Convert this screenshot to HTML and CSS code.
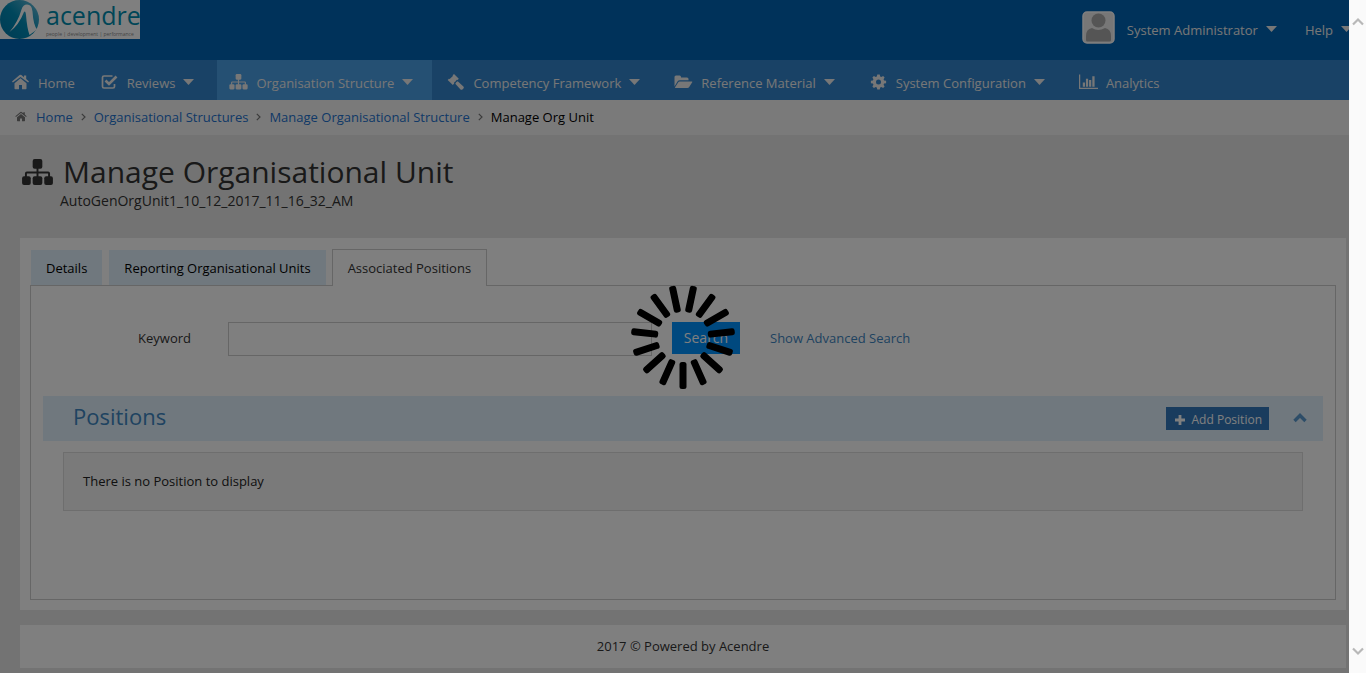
FILE: index.html
```html
<!DOCTYPE html>
<html lang="en">
<head>
<meta charset="utf-8">
<meta name="viewport" content="width=device-width, initial-scale=1">
<title>Manage Organisational Unit</title>
<link rel="stylesheet" href="styles.css">
</head>
<body>
<svg class="sprite" aria-hidden="true">
  <symbol id="sitemap" viewBox="0 0 32 28">
    <rect x="11" y="0" width="10" height="10" rx="2"/><rect x="0" y="18" width="9" height="9" rx="2"/><rect x="11" y="18" width="10" height="9" rx="2"/><rect x="23" y="18" width="9" height="9" rx="2"/>
    <path d="M15 9h2v4h10q2 0 2 2v4h-2v-4H17v4h-2v-4H5v4H3v-4q0-2 2-2h10z"/>
  </symbol>
  <symbol id="home" viewBox="0 0 18 16">
    <path d="M9 4.200 15 9.200V14.500q0 .7-.7.700H10.500V11h-3v4.200H3.700q-.7 0-.7-.7V9.200z"/>
    <path d="M9 .8q.5 0 .9.300L12.500 3.300V1.500h2.200V5.100L17.500 7.500l-.9 1.100L9 2.900 1.400 8.600.5 7.500 8.100 1.100Q8.500.8 9 .8z"/>
  </symbol>
  <symbol id="check" viewBox="0 0 18 16">
    <path d="M12 2H3.500Q2 2 2 3.500v9Q2 14 3.500 14h9q1.500 0 1.500-1.500V10" fill="none" stroke="currentColor" stroke-width="1.700"/>
    <path d="M5 6.500 8.500 10 16 2.500" fill="none" stroke="currentColor" stroke-width="2.600"/>
  </symbol>
  <symbol id="gavel" viewBox="0 0 18 16">
    <path d="M7.500 0 12.300 4.800l-1.200 1.200-.7-.2L8.800 7.400l.9.900 1.500-1 5.700 5.200q.9 1 0 1.900l-1 1q-1 .8-1.900 0l-5.200-5.700 1-1.500-.9-.9-1.400 1.400.2.700L6.300 11 1.200 6l1.200-1.200.8.200L6.400 1.900l-.2-.7z"/>
  </symbol>
  <symbol id="folder" viewBox="0 0 18 16">
    <path d="M0 12.500V3q0-1.500 1.500-1.500h3.700Q6.500 1.500 6.500 3v.500h6Q14 3.500 14 5v1.300H5.200q-1.200 0-2 1z"/>
    <path d="M5.200 7.400H17.300q1 0 .4.800l-3 4.800q-.6 1-1.700 1H1q-1 0-.4-.8L3.600 8.400q.6-1 1.600-1z"/>
  </symbol>
  <symbol id="gear" viewBox="0 0 18 16">
    <path fill-rule="evenodd" d="M7.800.500h2.400l.5 2 1.100.5L13.600 1.900l1.500 1.600-1 1.800.5 1.100 2 .4v2.400l-2 .4-.5 1.100 1 1.800-1.500 1.600-1.800-1.100-1.100.5-.5 2H7.800l-.5-2-1.100-.5-1.800 1.100-1.500-1.600 1-1.800-.5-1.100-2-.4V6.800l2-.4.500-1.100-1-1.800 1.500-1.600L6.200 3l1.100-.5zM9 5.500A2.500 2.500 0 1 0 9 10.500 2.500 2.500 0 1 0 9 5.500z"/>
  </symbol>
  <symbol id="chart" viewBox="0 0 20 16">
    <path d="M0 0h1.300v14H20v1.400H0zM4 8.500h2.300V13H4zM7.300 4.500h2.300V13H7.300zM10.600 6h2.300v7h-2.300zM14 2h2.400v11H14z"/>
  </symbol>
  <symbol id="caret" viewBox="0 0 11 6"><path d="M0 0h11L5.500 6z"/></symbol>
  <symbol id="up" viewBox="0 0 14 10"><path d="M1.500 8 7 2.500 12.500 8" fill="none" stroke="currentColor" stroke-width="3.400"/></symbol>
  <symbol id="thin-up" viewBox="0 0 12 9"><path d="M1 7.500 6 2.500l5 5" fill="none" stroke="currentColor" stroke-width="2.200"/></symbol>
  <symbol id="right" viewBox="0 0 5 8"><path d="M.8.800 4 4 .8 7.200" fill="none" stroke="currentColor" stroke-width="1.200"/></symbol>
  <symbol id="plus" viewBox="0 0 10 10"><path d="M3.600 0h2.800v3.600H10v2.800H6.400V10H3.600V6.400H0V3.600h3.600z"/></symbol>
</svg>

<header class="topbar">
  <a class="logo" href="#" aria-label="Acendre">
    <svg class="logo-mark" viewBox="0 0 40 39" aria-hidden="true">
      <defs>
        <linearGradient id="disc" x1="0" y1="1" x2="1" y2="0"><stop offset="0" stop-color="#0076a8"/><stop offset=".5" stop-color="#008db8"/><stop offset="1" stop-color="#70c0dc"/></linearGradient>
      </defs>
      <circle cx="19.500" cy="19.500" r="19.500" fill="url(#disc)"/>
      <path d="M9.500 32Q18 22 21.500 9.500 23 4.500 27 4.500q5 0 5.500 7 .8 13 4.500 18L29.500 35Q27 28 26 15 25.500 10 24 12 19 25 9.500 32z" fill="#fff"/>
    </svg>
    <span class="logo-text"><span class="logo-name">acendre</span><span class="logo-tag">people | development | performance</span></span>
  </a>
  <div class="account">
    <svg class="avatar" viewBox="0 0 33 33" aria-hidden="true"><rect x="1" y="1" width="31" height="31" rx="4" fill="#eee" stroke="#fff" stroke-width="1.500"/><circle cx="16.500" cy="9.500" r="7" fill="#aaa"/><path d="M4 29v-4q0-7 6-8 6 4 13 0 6 1 6 8v4q0 1.500-1.500 1.500h-22Q4 30.500 4 29z" fill="#aaa"/></svg>
    <button class="menu" type="button">System Administrator<svg class="caret"><use href="#caret"/></svg></button>
    <button class="menu" type="button">Help<svg class="caret"><use href="#caret"/></svg></button>
  </div>
</header>

<nav class="nav" aria-label="Main">
  <a class="nav-item plain" href="#"><svg class="nav-icon"><use href="#home"/></svg>Home</a>
  <a class="nav-item" href="#"><svg class="nav-icon"><use href="#check"/></svg>Reviews<svg class="caret"><use href="#caret"/></svg></a>
  <a class="nav-item active" href="#"><svg class="nav-icon"><use href="#sitemap"/></svg>Organisation Structure<svg class="caret"><use href="#caret"/></svg></a>
  <a class="nav-item" href="#"><svg class="nav-icon"><use href="#gavel"/></svg>Competency Framework<svg class="caret"><use href="#caret"/></svg></a>
  <a class="nav-item" href="#"><svg class="nav-icon"><use href="#folder"/></svg>Reference Material<svg class="caret"><use href="#caret"/></svg></a>
  <a class="nav-item" href="#"><svg class="nav-icon"><use href="#gear"/></svg>System Configuration<svg class="caret"><use href="#caret"/></svg></a>
  <a class="nav-item plain" href="#"><svg class="nav-icon"><use href="#chart"/></svg>Analytics</a>
</nav>

<nav class="crumbs" aria-label="Breadcrumb">
  <svg class="crumb-home"><use href="#home"/></svg>
  <a href="#">Home</a><svg class="sep"><use href="#right"/></svg>
  <a href="#">Organisational Structures</a><svg class="sep"><use href="#right"/></svg>
  <a href="#">Manage Organisational Structure</a><svg class="sep"><use href="#right"/></svg>
  <span>Manage Org Unit</span>
</nav>

<main class="main">
  <div class="heading">
    <h1><svg class="title-icon"><use href="#sitemap"/></svg>Manage Organisational Unit</h1>
    <p>AutoGenOrgUnit1_10_12_2017_11_16_32_AM</p>
  </div>
  <section class="panel">
    <div class="tabs" role="tablist">
      <button class="tab" type="button" role="tab">Details</button>
      <button class="tab" type="button" role="tab">Reporting Organisational Units</button>
      <button class="tab selected" type="button" role="tab" aria-selected="true">Associated Positions</button>
    </div>
    <div class="tab-body">
      <form class="search">
        <label for="keyword">Keyword</label>
        <input id="keyword" type="text">
        <button type="button">Search</button>
        <a href="#">Show Advanced Search</a>
      </form>
      <div class="section-head">
        <h2>Positions</h2>
        <button class="add" type="button"><svg class="plus"><use href="#plus"/></svg>Add Position</button>
        <button class="collapse" type="button" aria-label="Collapse"><svg><use href="#up"/></svg></button>
      </div>
      <p class="empty">There is no Position to display</p>
    </div>
  </section>
  <footer class="footer">2017 © Powered by Acendre</footer>
</main>

<div class="overlay" role="status" aria-label="Loading">
  <svg class="spinner" viewBox="-52 -52 104 104" aria-hidden="true">
    <defs><rect id="spoke" x="-3.500" y="25" width="7" height="27" rx="2.500"/></defs>
    <use href="#spoke"/><use href="#spoke" transform="rotate(24)"/><use href="#spoke" transform="rotate(48)"/><use href="#spoke" transform="rotate(72)"/><use href="#spoke" transform="rotate(96)"/><use href="#spoke" transform="rotate(120)"/><use href="#spoke" transform="rotate(144)"/><use href="#spoke" transform="rotate(168)"/><use href="#spoke" transform="rotate(192)"/><use href="#spoke" transform="rotate(216)"/><use href="#spoke" transform="rotate(240)"/><use href="#spoke" transform="rotate(264)"/><use href="#spoke" transform="rotate(288)"/><use href="#spoke" transform="rotate(312)"/><use href="#spoke" transform="rotate(336)"/>
  </svg>
</div>
<div class="scrollbar" aria-hidden="true">
  <svg><use href="#thin-up"/></svg>
  <svg class="down"><use href="#thin-up"/></svg>
</div>
</body>
</html>
```
FILE: styles.css
```css
* { box-sizing: border-box; }
html { height: 100%; overflow: hidden; }
body {
  margin: 0;
  min-height: 100%;
  background: #e6e6e6;
  color: #333;
  font: 13px/20px "Open Sans", "Noto Sans", sans-serif;
}
a { color: #2372cf; text-decoration: none; }
h1, h2, p { margin: 0; font-weight: 400; }
button, input { font: inherit; border: 0; border-radius: 0; }
button { padding: 0; color: inherit; background: none; }
svg { fill: currentColor; flex: none; }
.sprite { position: absolute; width: 0; height: 0; }

.topbar {
  display: flex;
  justify-content: space-between;
  align-items: flex-start;
  height: 60px;
  background: #0064b4;
  color: #eee;
}
.logo {
  display: flex;
  gap: 6px;
  width: 140px;
  height: 39px;
  background: #fff;
}
.logo-mark { width: 40px; height: 39px; }
.logo-text { display: flex; flex-direction: column; white-space: nowrap; }
.logo-name { color: #008cae; font-size: 25px; font-weight: 500; line-height: 31px; }
.logo-tag { color: #888; font-size: 5px; line-height: 6px; }
.account { display: flex; align-items: center; padding: 11px 4px 0 0; }
.avatar { width: 33px; height: 33px; margin-right: 12px; }
.menu { display: flex; align-items: center; margin-top: 5px; }
.menu + .menu { margin-left: 28px; padding-right: 10px; }
.caret { width: 11px; height: 6px; margin: 0 0 2px 8px; }

.nav {
  display: flex;
  gap: 3px;
  height: 40px;
  background: #3385cc;
}
.nav-item {
  display: flex;
  align-items: center;
  padding: 5px 20px 0 11px;
  color: #eee;
}
.nav-item.plain { padding-right: 11px; }
.nav-item.active { padding: 5px 19px 0 12px; background: #4ba0e6; }
.nav-icon { width: 19px; height: 16px; margin: 0 8px 2px 0; }

.crumbs {
  display: flex;
  align-items: center;
  height: 35px;
  padding: 0 0 2px 15px;
  background: #f5f5f5;
  color: #000;
}
.crumb-home { width: 12px; height: 11px; margin-right: 9px; color: #777; }
.sep { width: 5px; height: 8px; margin: 0 8px; color: #777; }

.main { padding: 0 20px 5px; }
.heading { height: 103px; padding-top: 17px; }
h1 { display: flex; align-items: center; font-size: 30px; line-height: 40px; }
.title-icon { width: 31px; height: 27px; margin: 1px 10px 0 2px; }
.heading p { padding-left: 40px; font-size: 14px; line-height: 18px; }

.panel { padding: 11px 10px 10px; background: #fff; }
.tabs { display: flex; gap: 6px; height: 37px; margin-bottom: -1px; }
.tab {
  padding: 1px 15px 0;
  margin: 1px 0 1px 1px;
  background: #e0f1fc;
  color: #000;
}
.tab.selected {
  position: relative;
  margin: 0;
  padding: 0 15px 1px;
  background: #fff;
  border: 1px solid #ccc;
  border-bottom: 0;
  color: #333;
}
.tab-body {
  min-height: 315px;
  padding: 36px 12px;
  border: 1px solid #ccc;
}
.search { display: flex; align-items: flex-start; }
.search label { width: 148px; line-height: 32px; text-align: right; }
.search input {
  width: 424px;
  height: 34px;
  margin-left: 37px;
  padding: 0 12px;
  background: #fff;
  border: 1px solid #ccc;
}
.search button {
  width: 68px;
  height: 32px;
  margin-left: 20px;
  background: #0092fe;
  color: #fff;
  font-size: 14px;
}
.search a { margin-left: 30px; line-height: 32px; color: #3e86c2; }
.section-head {
  display: flex;
  align-items: center;
  height: 45px;
  margin-top: 40px;
  padding: 0 16px 0 30px;
  background: #e0f1fc;
  color: #3e86c2;
}
h2 { flex: 1; padding-bottom: 5px; font-size: 22px; line-height: 40px; }
.add {
  display: flex;
  align-items: center;
  height: 23px;
  padding: 2px 7px 0 9px;
  background: #3379bd;
  color: #fff;
  font-size: 12px;
}
.plus { width: 10px; height: 10px; margin-right: 7px; }
.collapse { margin: 0 0 2px 24px; color: #5b9bd0; }
.collapse svg { display: block; width: 14px; height: 10px; }
.empty {
  margin: 11px 20px 0;
  padding: 18px 19px 19px;
  background: #f5f5f5;
  border: 1px solid #ddd;
  color: #222;
}
.footer {
  margin-top: 15px;
  padding: 11px 11px 12px;
  background: #fff;
  text-align: center;
}

.overlay {
  position: fixed;
  inset: 0;
  display: grid;
  place-items: center;
  background: rgba(0, 0, 0, .5);
}
.spinner { width: 104px; height: 104px; fill: #000; }
.scrollbar {
  position: fixed;
  inset: 0 0 0 auto;
  display: flex;
  flex-direction: column;
  justify-content: space-between;
  width: 17px;
  padding: 17px 3px;
  background: #fafafa;
  color: #b8b8b8;
}
.scrollbar svg { width: 12px; height: 9px; }
.down { transform: rotate(180deg); }
```
